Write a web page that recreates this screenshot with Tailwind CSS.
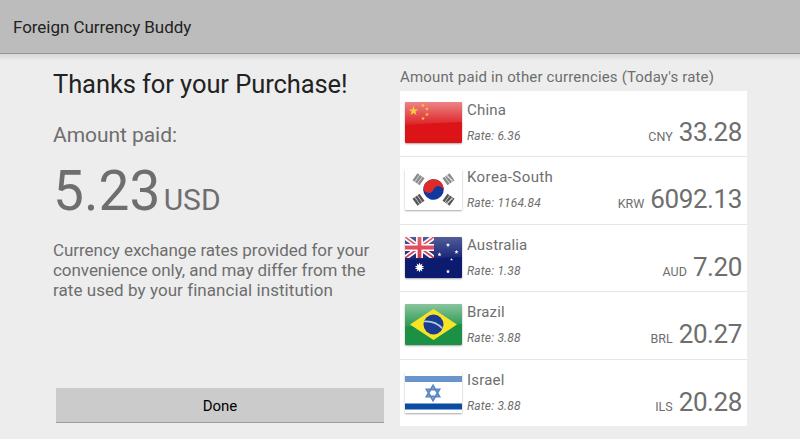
<!DOCTYPE html>
<html lang="en">
<head>
    <meta charset="UTF-8">
    <meta name="viewport" content="width=device-width, initial-scale=1.0">
    <title>Foreign Currency Buddy</title>
    <script src="https://cdn.jsdelivr.net/npm/@tailwindcss/browser@4"></script>
</head>
<body class="flex h-screen flex-col overflow-hidden bg-[#ededed] font-['Roboto',sans-serif] text-[#6e6e6e]">
    <!-- Action bar -->
    <header class="flex h-[54px] shrink-0 items-center border-b border-[#969696] bg-[#bcbcbc] pt-[2px] pl-[13px] text-[#222]">
        <h1 class="text-[17px] tracking-[-0.05px]">Foreign Currency Buddy</h1>
    </header>
    <div class="h-[7px] shrink-0 bg-linear-to-b from-[#d6d6d6] to-[#ededed]"></div>

    <main class="flex min-h-0 flex-1 pl-[53px]">
        <!-- Purchase summary -->
        <section class="flex w-[347px] flex-col whitespace-nowrap">
            <h2 class="mt-[7px] text-[25.5px] leading-[32px] tracking-[-0.08px] text-[#222]">Thanks for your Purchase!</h2>
            <p class="mt-[21px] text-[21px] leading-[28px] tracking-[-0.05px]">Amount paid:</p>
            <p class="mt-[9px] flex items-baseline leading-[66px]">
                <span class="text-[55px] tracking-[0.1px]">5.23</span>
                <span class="ml-[3px] text-[30px]">USD</span>
            </p>
            <p class="mt-[7px] text-[17px] leading-[20px] tracking-[-0.05px]">Currency exchange rates provided for your<br>convenience only, and may differ from the<br><span class="tracking-[0.06px]">rate used by your financial institution</span></p>
            <button class="mt-[88px] ml-[3px] h-[35px] w-[328px] border-b border-[#9c9c9c] bg-[#cbcbcb] pt-[2px] text-[15px] text-black">Done</button>
        </section>

        <!-- Converted amounts -->
        <section class="w-[347px] whitespace-nowrap">
            <h3 class="mt-[6px] text-[15px] leading-[20px] tracking-[0.16px]">Amount paid in other currencies (Today's rate)</h3>
            <ul class="mt-[4px] divide-y divide-[#e6e6e6] bg-white">
                <li class="flex h-[66px] pt-[11px] pr-[5px] pl-[5px]">
                    <svg class="h-[41px] w-[57px] rounded-[1px] shadow-[0_1px_2px_rgba(0,0,0,0.35)]" viewBox="0 0 57 41">
                        <defs>
                            <linearGradient id="gloss" x1="0" y1="0" x2="0" y2="1">
                                <stop offset="0" stop-color="#fff" stop-opacity=".48"/>
                                <stop offset="1" stop-color="#fff" stop-opacity=".06"/>
                            </linearGradient>
                            <polygon id="star" points="0,-5 1.2,-1.6 4.8,-1.5 1.9,.6 2.9,4 0,2 -2.9,4 -1.9,.6 -4.8,-1.5 -1.2,-1.6"/>
                        </defs>
                        <path fill="#dc1418" d="M0 0h57v41H0z"/>
                        <path fill="url(#gloss)" d="M0 0h57v20Q28 21 0 23z"/>
                        <g fill="#f8cc3c">
                            <use href="#star" x="8.5" y="9"/>
                            <use href="#star" transform="translate(18 3.5) scale(.4)"/>
                            <use href="#star" transform="translate(22 7) scale(.4)"/>
                            <use href="#star" transform="translate(22 12.5) scale(.4)"/>
                            <use href="#star" transform="translate(18 16.5) scale(.4)"/>
                        </g>
                    </svg>
                    <div class="ml-[5px]">
                        <p class="text-[15px] leading-[16px] tracking-[0.2px]">China</p>
                        <p class="mt-[11px] text-[12px] leading-[14px] tracking-[0.18px] italic">Rate: 6.36</p>
                    </div>
                    <p class="mt-[14px] ml-auto flex items-baseline gap-[6px] leading-[32px]"><span class="text-[12.5px]">CNY</span><span class="text-[26px] tracking-[-0.4px]">33.28</span></p>
                </li>
                <li class="flex h-[68px] pt-[12px] pr-[5px] pl-[5px]">
                    <svg class="h-[41px] w-[57px] rounded-[1px] shadow-[0_1px_2px_rgba(0,0,0,0.35)]" viewBox="0 0 57 41">
                        <path fill="#fff" d="M0 0h57v41H0z"/>
                        <g transform="rotate(20 28.5 20.5)">
                            <circle cx="28.5" cy="20.5" r="10.3" fill="#12389c"/>
                            <path fill="#e02a2a" d="M18.2 20.5a10.3 10.3 0 0 1 20.6 0a5.15 5.15 0 0 0-10.3 0a5.15 5.15 0 0 1-10.3 0z"/>
                        </g>
                        <g fill="none" stroke-width="2.5">
                            <path stroke="#8c8c8c" d="M8.5 12l5-7M11 13.7l5-7M13.5 15.4l5-7"/>
                            <path stroke="#8c8c8c" d="M48.5 12l-5-7M46 13.7l-5-7M43.5 15.4l-5-7"/>
                            <path stroke="#585858" d="M8.5 29l5 7M11 27.3l5 7M13.5 25.6l5 7"/>
                            <path stroke="#585858" d="M48.5 29l-5 7M46 27.3l-5 7M43.5 25.6l-5 7"/>
                        </g>
                        <path stroke="#fff" stroke-width=".7" d="M40 6l8 5.5M40 35l8-5.5"/>
                    </svg>
                    <div class="ml-[5px]">
                        <p class="text-[15px] leading-[16px] tracking-[0.4px]">Korea-South</p>
                        <p class="mt-[11px] text-[12px] leading-[14px] tracking-[0.18px] italic">Rate: 1164.84</p>
                    </div>
                    <p class="mt-[14px] ml-auto flex items-baseline gap-[6px] leading-[32px]"><span class="text-[12.5px]">KRW</span><span class="text-[26px] tracking-[-0.4px]">6092.13</span></p>
                </li>
                <li class="flex h-[67px] pt-[12px] pr-[5px] pl-[5px]">
                    <svg class="h-[41px] w-[57px] rounded-[1px] shadow-[0_1px_2px_rgba(0,0,0,0.35)]" viewBox="0 0 57 41">
                        <path fill="#0c1a70" d="M0 0h57v41H0z"/>
                        <svg width="29" height="21" viewBox="0 0 29 21">
                            <path stroke="#fff" stroke-width="5" d="M0 0l29 21M29 0L0 21"/>
                            <path stroke="#d8283c" stroke-width="1.8" d="M0 0l29 21M29 0L0 21"/>
                            <path stroke="#fff" stroke-width="7" d="M14.5 0v21M0 10.5h29"/>
                            <path stroke="#d8283c" stroke-width="3.8" d="M14.5 0v21M0 10.5h29"/>
                        </svg>
                        <path fill="url(#gloss)" fill-opacity=".6" d="M0 0h57v20Q28 21 0 23z"/>
                        <g fill="#fff">
                            <use href="#star" x="14.5" y="30.5"/>
                            <use href="#star" transform="translate(14.5 30.5) rotate(180)"/>
                            <use href="#star" transform="translate(43 8) scale(.44)"/>
                            <use href="#star" transform="translate(34.5 17.5) scale(.44)"/>
                            <use href="#star" transform="translate(51.5 15) scale(.44)"/>
                            <use href="#star" transform="translate(46.5 22.5) scale(.3)"/>
                            <use href="#star" transform="translate(43 34.5) scale(.44)"/>
                        </g>
                    </svg>
                    <div class="ml-[5px]">
                        <p class="text-[15px] leading-[16px] tracking-[0.15px]">Australia</p>
                        <p class="mt-[11px] text-[12px] leading-[14px] tracking-[0.18px] italic">Rate: 1.38</p>
                    </div>
                    <p class="mt-[14px] ml-auto flex items-baseline gap-[6px] leading-[32px]"><span class="text-[12.5px]">AUD</span><span class="text-[26px] tracking-[-0.4px]">7.20</span></p>
                </li>
                <li class="flex h-[68px] pt-[12px] pr-[5px] pl-[5px]">
                    <svg class="h-[41px] w-[57px] rounded-[1px] shadow-[0_1px_2px_rgba(0,0,0,0.35)]" viewBox="0 0 57 41">
                        <path fill="#1c9044" d="M0 0h57v41H0z"/>
                        <path fill="url(#gloss)" d="M0 0h57v20Q28 21 0 23z"/>
                        <path fill="#f8e424" d="M28.5 5L52 20.5L28.5 36L5 20.5z"/>
                        <circle cx="28.5" cy="20.5" r="10" fill="#1c3c92"/>
                        <path fill="none" stroke="#a9cfd8" stroke-width="1.6" d="M19 17.5q11-1 18.5 7"/>
                    </svg>
                    <div class="ml-[5px]">
                        <p class="text-[15px] leading-[16px] tracking-[0.1px]">Brazil</p>
                        <p class="mt-[11px] text-[12px] leading-[14px] tracking-[0.18px] italic">Rate: 3.88</p>
                    </div>
                    <p class="mt-[14px] ml-auto flex items-baseline gap-[6px] leading-[32px]"><span class="text-[12.5px]">BRL</span><span class="text-[26px] tracking-[-0.4px]">20.27</span></p>
                </li>
                <li class="flex h-[66px] pt-[12px] pr-[5px] pl-[5px]">
                    <svg class="h-[41px] w-[57px] rounded-[1px] shadow-[0_1px_2px_rgba(0,0,0,0.35)]" viewBox="0 0 57 41">
                        <path fill="#fff" d="M0 0h57v41H0z"/>
                        <path fill="#6a94cc" d="M0 4h57v6H0z"/>
                        <path fill="#0c4ca4" d="M0 31.5h57v6H0z"/>
                        <path fill="none" stroke="#5a86c4" stroke-width="1.8" d="M28 13.5l6.5 11h-13zM28 28.5l6.5-11h-13z"/>
                    </svg>
                    <div class="ml-[5px]">
                        <p class="text-[15px] leading-[16px] tracking-[0.2px]">Israel</p>
                        <p class="mt-[11px] text-[12px] leading-[14px] tracking-[0.18px] italic">Rate: 3.88</p>
                    </div>
                    <p class="mt-[14px] ml-auto flex items-baseline gap-[6px] leading-[32px]"><span class="text-[12.5px]">ILS</span><span class="text-[26px] tracking-[-0.4px]">20.28</span></p>
                </li>
            </ul>
        </section>
    </main>
</body>
</html>
